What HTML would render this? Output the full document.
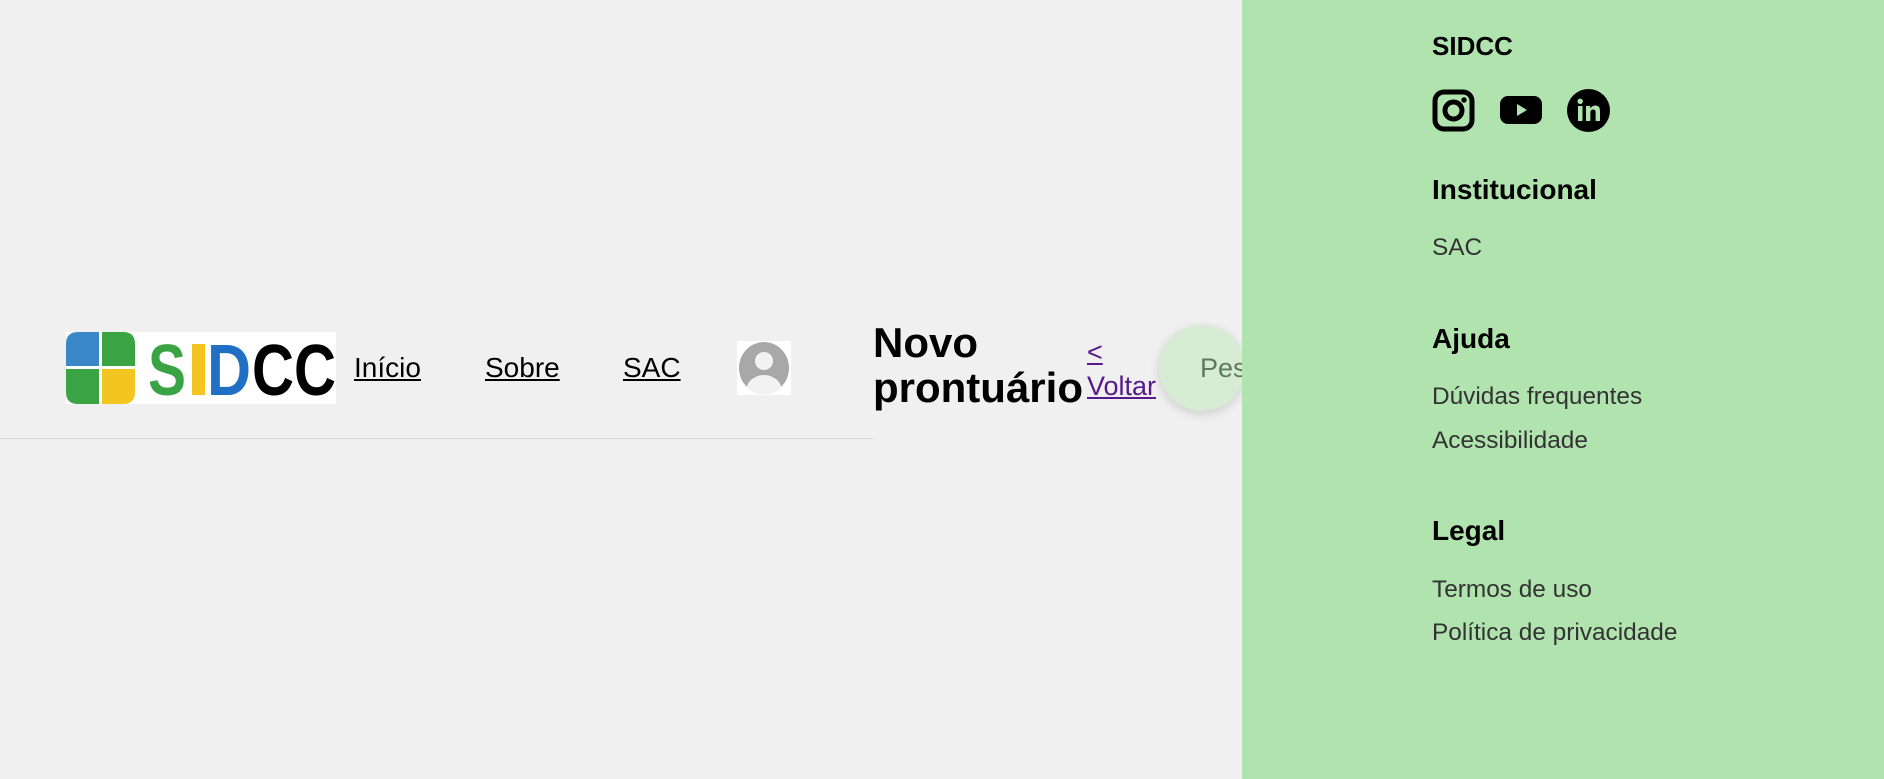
<!DOCTYPE html>
<html><head><meta charset="utf-8"><style>
*{margin:0;padding:0;box-sizing:border-box}
body{width:1884px;height:779px;background:#f0f0f0;font-family:"Liberation Sans",Arial,sans-serif;position:relative;overflow:hidden}
.abs{position:absolute}
.nav a{position:absolute;color:#000;text-decoration:underline;font-size:28px;top:352px;line-height:32px}
.panel{position:absolute;left:1242px;top:0;width:642px;height:779px;background:#b0e3ae}
.panel h3{position:absolute;left:190px;font-size:28px;font-weight:bold;color:#000;line-height:32px}
.panel p{position:absolute;left:190px;font-size:24.4px;color:#333;line-height:28px}
</style></head><body>
<div class="abs" style="left:0;top:438px;width:873px;height:1px;background:#d8d8d8"></div>
<div class="abs" style="left:66px;top:332px;width:270px;height:72px;background:#fff">
<svg width="270" height="72" viewBox="0 0 270 72">
<path d="M0 12 Q0 0 12 0 H33 V34 H0Z" fill="#3a88c8"/>
<path d="M36 0 H57 Q69 0 69 12 V34 H36Z" fill="#3aa444"/>
<path d="M0 37 H33 V72 H12 Q0 72 0 60Z" fill="#3aa444"/>
<path d="M36 37 H69 V60 Q69 72 57 72 H36Z" fill="#f2c521"/>
<text x="82" y="63" font-family="Liberation Sans" font-weight="bold" font-size="72" fill="#3aa444" textLength="38" lengthAdjust="spacingAndGlyphs">S</text>
<rect x="126" y="12" width="13" height="51" fill="#f2c521"/>
<text x="141" y="63" font-family="Liberation Sans" font-weight="bold" font-size="72" fill="#1f6fc4" textLength="44" lengthAdjust="spacingAndGlyphs">D</text>
<text x="186" y="63" font-family="Liberation Sans" font-weight="bold" font-size="72" fill="#000" textLength="84" lengthAdjust="spacingAndGlyphs">CC</text>
</svg></div>
<div class="nav">
<a style="left:354px">Início</a>
<a style="left:485px">Sobre</a>
<a style="left:623px">SAC</a>
</div>
<div class="abs" style="left:737px;top:341px;width:54px;height:54px;background:#fff">
<svg width="54" height="54" viewBox="0 0 54 54"><defs><clipPath id="c"><ellipse cx="27" cy="27" rx="25" ry="26"/></clipPath></defs>
<ellipse cx="27" cy="27" rx="25" ry="26" fill="#a8a8a8"/>
<g clip-path="url(#c)" fill="#f2f2f2"><circle cx="27" cy="20" r="9"/><ellipse cx="27" cy="50" rx="18" ry="16"/></g></svg></div>
<div class="abs" style="left:873px;top:320px;font-size:42px;font-weight:bold;line-height:45px;color:#000">Novo<br>prontuário</div>
<a class="abs" style="left:1087px;top:335px;font-size:27px;line-height:34px;color:#551a8b;text-decoration:underline">&lt;<br>Voltar</a>
<div class="abs" style="left:1159px;top:325px;width:86px;height:86px;border-radius:50%;background:#d8ebd4;box-shadow:0 3px 10px rgba(0,0,0,.15);font-size:27px;color:#5a7d5a;line-height:86px;padding-left:41px;white-space:nowrap;overflow:hidden">Pesquisar</div>
<div class="panel">
<h3 style="top:30px;font-size:26px">SIDCC</h3>
<svg class="abs" style="left:190px;top:89px" width="43" height="43" viewBox="0 0 43 43"><rect x="3" y="3" width="37" height="37" rx="9" fill="none" stroke="#000" stroke-width="5"/><circle cx="21.5" cy="21.5" r="8.5" fill="none" stroke="#000" stroke-width="5"/><circle cx="32" cy="11" r="2.7"/></svg>
<svg class="abs" style="left:258px;top:94px" width="42" height="32" viewBox="0 0 42 32"><rect x="0" y="2" width="42" height="28" rx="8"/><path d="M17 10 L27 16 L17 22Z" fill="#b0e3ae"/></svg>
<svg class="abs" style="left:325px;top:89px" width="43" height="43" viewBox="0 0 43 43"><circle cx="21.5" cy="21.5" r="21.5"/><rect x="11" y="17" width="4.5" height="15" fill="#b0e3ae"/><circle cx="13.2" cy="12.3" r="2.7" fill="#b0e3ae"/><path d="M19 17 H23.3 V19.5 Q25 16.5 28.5 16.5 Q33 16.5 33 22 V32 H28.6 V23 Q28.6 20.5 26.2 20.5 Q23.4 20.5 23.4 23.5 V32 H19Z" fill="#b0e3ae"/></svg>
<h3 style="top:174px">Institucional</h3>
<p style="top:234px">SAC</p>
<h3 style="top:323px">Ajuda</h3>
<p style="top:383px">Dúvidas frequentes</p>
<p style="top:427px">Acessibilidade</p>
<h3 style="top:515px">Legal</h3>
<p style="top:576px">Termos de uso</p>
<p style="top:619px">Política de privacidade</p>
</div>
</body></html>
